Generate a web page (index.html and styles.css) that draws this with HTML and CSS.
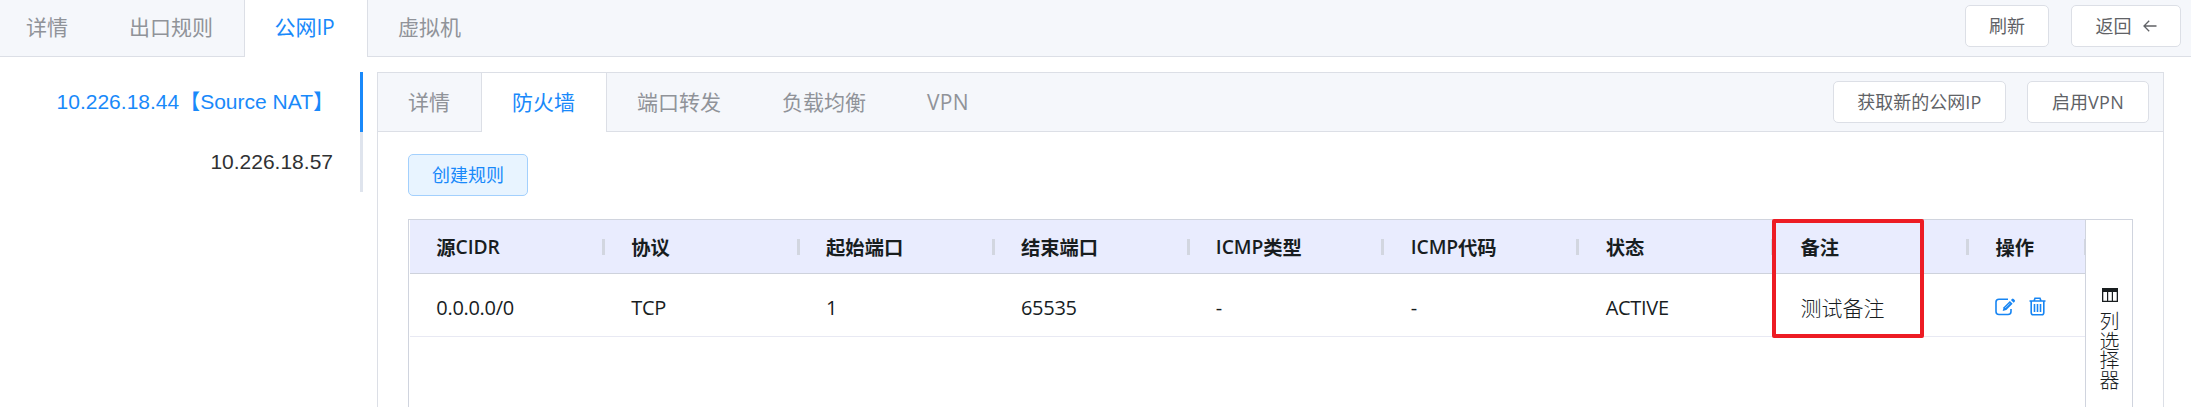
FILE: index.html
```html
<!DOCTYPE html>
<html lang="zh-CN">
<head>
<meta charset="utf-8">
<title>公网IP</title>
<link rel="stylesheet" href="styles.css">
</head>
<body>
<header class="bar topbar">
  <nav class="tabs">
    <a class="tab first">详情</a>
    <a class="tab">出口规则</a>
    <a class="tab active">公网<span class="lat">IP</span></a>
    <a class="tab">虚拟机</a>
  </nav>
  <div class="actions">
    <button class="btn refresh">刷新</button>
    <button class="btn back">返回<svg width="14" height="12" viewBox="0 0 14 12"><path d="M13.5 6H1M6.200 .8L1 6l5.200 5.200" fill="none" stroke="#606266" stroke-width="1.300"/></svg></button>
  </div>
</header>
<main class="main">
  <aside class="ips">
    <div class="ip current">10.226.18.44【Source NAT】</div>
    <div class="ip">10.226.18.57</div>
  </aside>
  <section class="card">
    <div class="bar cardbar">
      <nav class="tabs">
        <a class="tab">详情</a>
        <a class="tab active">防火墙</a>
        <a class="tab">端口转发</a>
        <a class="tab">负载均衡</a>
        <a class="tab"><span class="wide">VPN</span></a>
      </nav>
      <div class="actions">
        <button class="btn acquire">获取新的公网<span class="wide">IP</span></button>
        <button class="btn vpn">启用<span class="wide">VPN</span></button>
      </div>
    </div>
    <div class="body">
      <button class="btn create">创建规则</button>
      <div class="grid">
        <div class="table">
          <div class="row head">
            <div class="cell">源<span class="lat">CIDR</span></div>
            <div class="cell">协议</div>
            <div class="cell">起始端口</div>
            <div class="cell">结束端口</div>
            <div class="cell"><span class="lat">ICMP</span>类型</div>
            <div class="cell"><span class="lat">ICMP</span>代码</div>
            <div class="cell">状态</div>
            <div class="cell">备注</div>
            <div class="cell last">操作</div>
          </div>
          <div class="row data">
            <div class="cell"><span class="lat">0.0.0.0/0</span></div>
            <div class="cell"><span class="lat">TCP</span></div>
            <div class="cell"><span class="lat">1</span></div>
            <div class="cell"><span class="lat">65535</span></div>
            <div class="cell"><span class="lat">-</span></div>
            <div class="cell"><span class="lat">-</span></div>
            <div class="cell"><span class="lat">ACTIVE</span></div>
            <div class="cell">测试备注</div>
            <div class="cell icons">
              <svg width="21" height="18" viewBox="0 0 21 18" fill="none" stroke="#1785f3"><path d="M13 1.200H4Q1 1.200 1 4V13.500Q1 16.500 4 16.500H13Q16 16.500 16 13.500V11" stroke-width="1.600"/><path d="M7.700 12.900L8.600 9.300L14.900 3L17.600 5.700L11.300 12Z" fill="#1785f3" stroke="none"/><path d="M15.900 2L17 .9Q17.800 .3 18.600 1L19.700 2.100Q20.400 2.900 19.700 3.700L18.600 4.700Z" fill="#1785f3" stroke="none"/><path d="M10.200 10L14.800 5.400" stroke="#fff" stroke-width=".6"/></svg>
              <svg width="17" height="19" viewBox="0 0 17 19" fill="none" stroke="#1785f3" stroke-width="1.600"><path d="M.5 4H16.500M5 4L6 1.200H11L12 4M2.200 4V15.500Q2.200 17.800 4.200 17.800H12.800Q14.800 17.800 14.800 15.500V4"/><path d="M5.500 7V15M8.500 7V15M11.500 7V15"/></svg>
            </div>
          </div>
          <div class="mark"></div>
        </div>
        <div class="side">
          <svg width="16" height="14" viewBox="0 0 16 14"><path d="M0 0H16V14H0ZM1.300 4V12.700H5V4ZM6.200 4V12.700H9.800V4ZM11 4V12.700H14.700V4Z" fill="#181d1f" fill-rule="evenodd"/></svg>
          <span class="sidetext">列选择器</span>
        </div>
      </div>
    </div>
  </section>
</main>
</body>
</html>
```
FILE: styles.css
```css
* { box-sizing: border-box; }
body {
  margin: 0;
  width: 2191px;
  height: 407px;
  overflow: hidden;
  background: #fff;
  font-family: "Open Sans", "Noto Sans CJK SC", sans-serif;
  font-weight: 300;
  font-size: 21px;
  color: #303133;
}
.bar { display: flex; justify-content: space-between; background: #f5f7fb; border-bottom: 1px solid #dcdfe6; }
.topbar { height: 57px; }
.cardbar { height: 59px; }
.tabs { display: flex; }
.tab { padding: 0 29.500px; line-height: 55px; border: solid transparent; border-width: 0 1px; color: #909399; margin-bottom: -1px; white-space: nowrap; font-weight: 400; }
.topbar .active { width: 124px; padding-left: 30px; }
.cardbar .tab { line-height: 58px; padding: 0 30px 0 29px; }
.cardbar .tab:first-child { padding: 0 30px; border-left: 0; }
.cardbar .active { width: 126px; padding: 0 0 0 30px; }
.topbar .first { padding-left: 25px; }
.tab.active { background: #fff; color: #1989fa; border-color: #dcdfe6; }
.lat { letter-spacing: -.45px; }
.actions { display: flex; }
.btn { height: 42px; padding: 0; display: flex; align-items: center; justify-content: center; font: inherit; font-weight: 400; font-size: 18px; line-height: 24px; color: #606266; background: #fff; border: 1px solid #dcdfe6; border-radius: 5px; white-space: nowrap; }
.topbar .actions { gap: 22px; padding: 5px 10px 0 0; }
.refresh { width: 84px; }
.back { width: 110px; gap: 11px; }
.cardbar .actions { gap: 21px; padding: 8px 14px 0 0; }
.wide { letter-spacing: .3px; }
.acquire { width: 173px; }
.vpn { width: 122px; }
.main { display: flex; gap: 14px; padding: 15px 27px 0 0; height: 350px; }
.ips { width: 363px; font-family: "Liberation Sans", "Noto Sans CJK SC", sans-serif; font-weight: 400; }
.ip { height: 60px; line-height: 60px; padding-right: 27px; text-align: right; border-right: 3px solid #dfe4ed; }
.ip.current { padding-right: 26px; color: #1989fa; border-color: #1989fa; }
.card { width: 1787px; height: 335px; border: 1px solid #dcdfe6; border-bottom: 0; }
.body { padding: 22px 30px 0; }
.create { width: 120px; color: #1989fa; background: #e8f4ff; border-color: #a3d0fd; }
.grid { display: flex; width: 1725px; height: 188px; margin-top: 23px; border: 1px solid #d0d4de; border-bottom: 0; color: #181d1f; }
.table { position: relative; width: 1676px; flex: none; padding-left: 1px; }
.row { display: grid; grid-template-columns: repeat(8, 194.900px) 1fr; align-items: center; overflow: hidden; }
.head { height: 54px; background: #e9ecfe; border-bottom: 1px solid #ced2dc; font-size: 19.300px; font-weight: 700; }
.head .lat { font-weight: 600; letter-spacing: -.1px; }
.head .cell { display: flex; align-items: center; }
.head .cell::after { content: ""; width: 3px; height: 16px; margin-left: auto; background: #d2d6e0; }
.head .last::after { width: 1px; }
.data { height: 63px; padding-top: 3px; border-bottom: 1px solid #e8e9f3; }
.data .lat { font-size: 20px; font-weight: 400; letter-spacing: -.3px; }
.cell { padding-left: 26.300px; white-space: nowrap; }
.icons { display: flex; gap: 13px; align-items: center; }
.mark { position: absolute; left: 1363px; top: -1px; width: 152px; height: 119px; border: 4px solid #ed1c24; border-radius: 2px; }
.side { width: 47px; flex: none; border-left: 1px solid #d0d4de; display: flex; flex-direction: column; align-items: center; padding: 68px 0 0 1px; gap: 10px; }
.sidetext { width: 20px; font-size: 20px; line-height: 19.500px; word-break: break-all; }
```
